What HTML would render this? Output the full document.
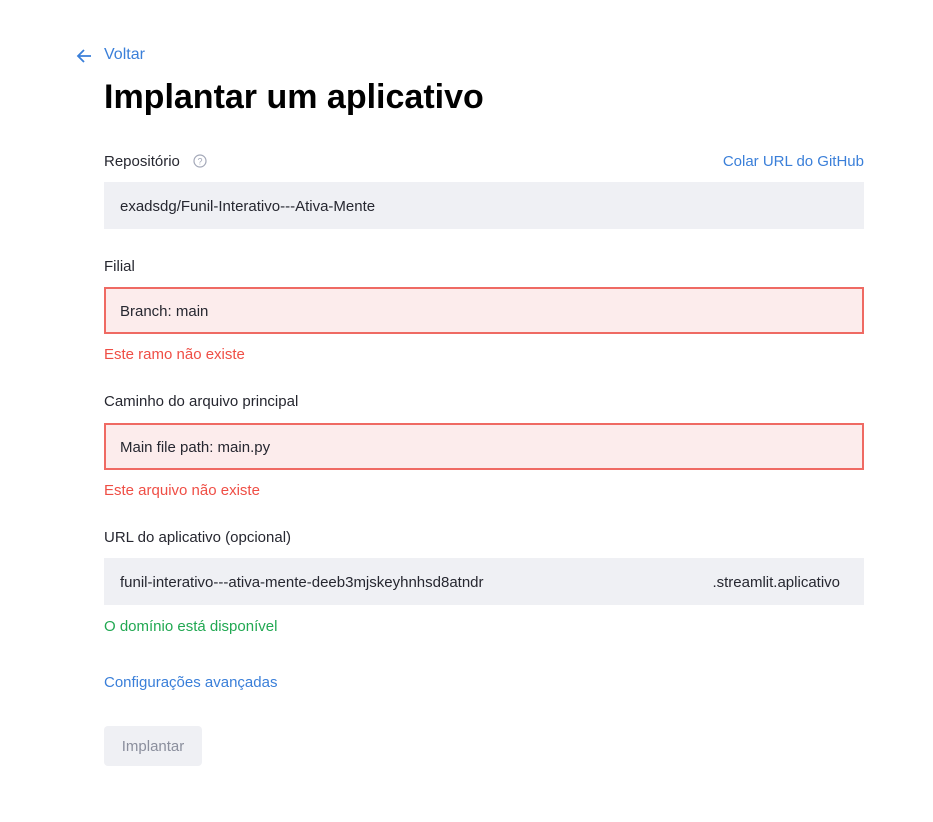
<!DOCTYPE html>
<html><head><style>
body{margin:0;width:933px;height:822px;background:#fff;font-family:"Liberation Sans",sans-serif;position:relative;color:#262730}
.a{position:absolute;white-space:nowrap}
.lbl{font-size:15px;color:#262730}
.box{position:absolute;left:104px;width:760px;height:47px;background:#eff0f4;box-sizing:border-box;font-size:15px;line-height:49px;padding-left:16px}
.err{background:#fcecec;border:2px solid #ef6a63;line-height:45px;padding-left:14px}
.red{color:#ef4e45;font-size:15px}
.blue{color:#3a7fd9;font-size:15px}
</style></head><body>
<svg class="a" style="left:75px;top:47px" width="18" height="18" viewBox="0 0 18 18"><path d="M16 9H3M9 3L3 9l6 6" fill="none" stroke="#3a7fd9" stroke-width="1.8"/></svg>
<div class="a blue" style="left:104px;top:46px;font-size:16px">Voltar</div>
<div class="a" style="left:104px;top:78px;font-size:34px;font-weight:bold;color:#000">Implantar um aplicativo</div>
<div class="a lbl" style="left:104px;top:153px">Repositório</div>
<svg class="a" style="left:193px;top:154px" width="14" height="14" viewBox="0 0 14 14"><circle cx="7" cy="7" r="6" fill="none" stroke="#a3a8b8" stroke-width="1.2"/><text x="7" y="10.5" font-size="9" text-anchor="middle" fill="#a3a8b8" font-family="Liberation Sans">?</text></svg>
<div class="a blue" style="right:69px;top:153px">Colar URL do GitHub</div>
<div class="box" style="top:182px">exadsdg/Funil-Interativo---Ativa-Mente</div>
<div class="a lbl" style="left:104px;top:258px">Filial</div>
<div class="box err" style="top:287px">Branch: main</div>
<div class="a red" style="left:104px;top:346px">Este ramo não existe</div>
<div class="a lbl" style="left:104px;top:393px">Caminho do arquivo principal</div>
<div class="box err" style="top:423px">Main file path: main.py</div>
<div class="a red" style="left:104px;top:482px">Este arquivo não existe</div>
<div class="a lbl" style="left:104px;top:529px">URL do aplicativo (opcional)</div>
<div class="box" style="top:558px">funil-interativo---ativa-mente-deeb3mjskeyhnhsd8atndr<span style="position:absolute;right:24px">.streamlit.aplicativo</span></div>
<div class="a" style="left:104px;top:618px;font-size:15px;color:#21a852">O domínio está disponível</div>
<div class="a blue" style="left:104px;top:674px">Configurações avançadas</div>
<div class="a" style="left:104px;top:726px;width:98px;height:40px;background:#eff0f4;border-radius:4px;color:#8b8f9d;font-size:15px;line-height:41px;text-align:center">Implantar</div>
</body></html>
